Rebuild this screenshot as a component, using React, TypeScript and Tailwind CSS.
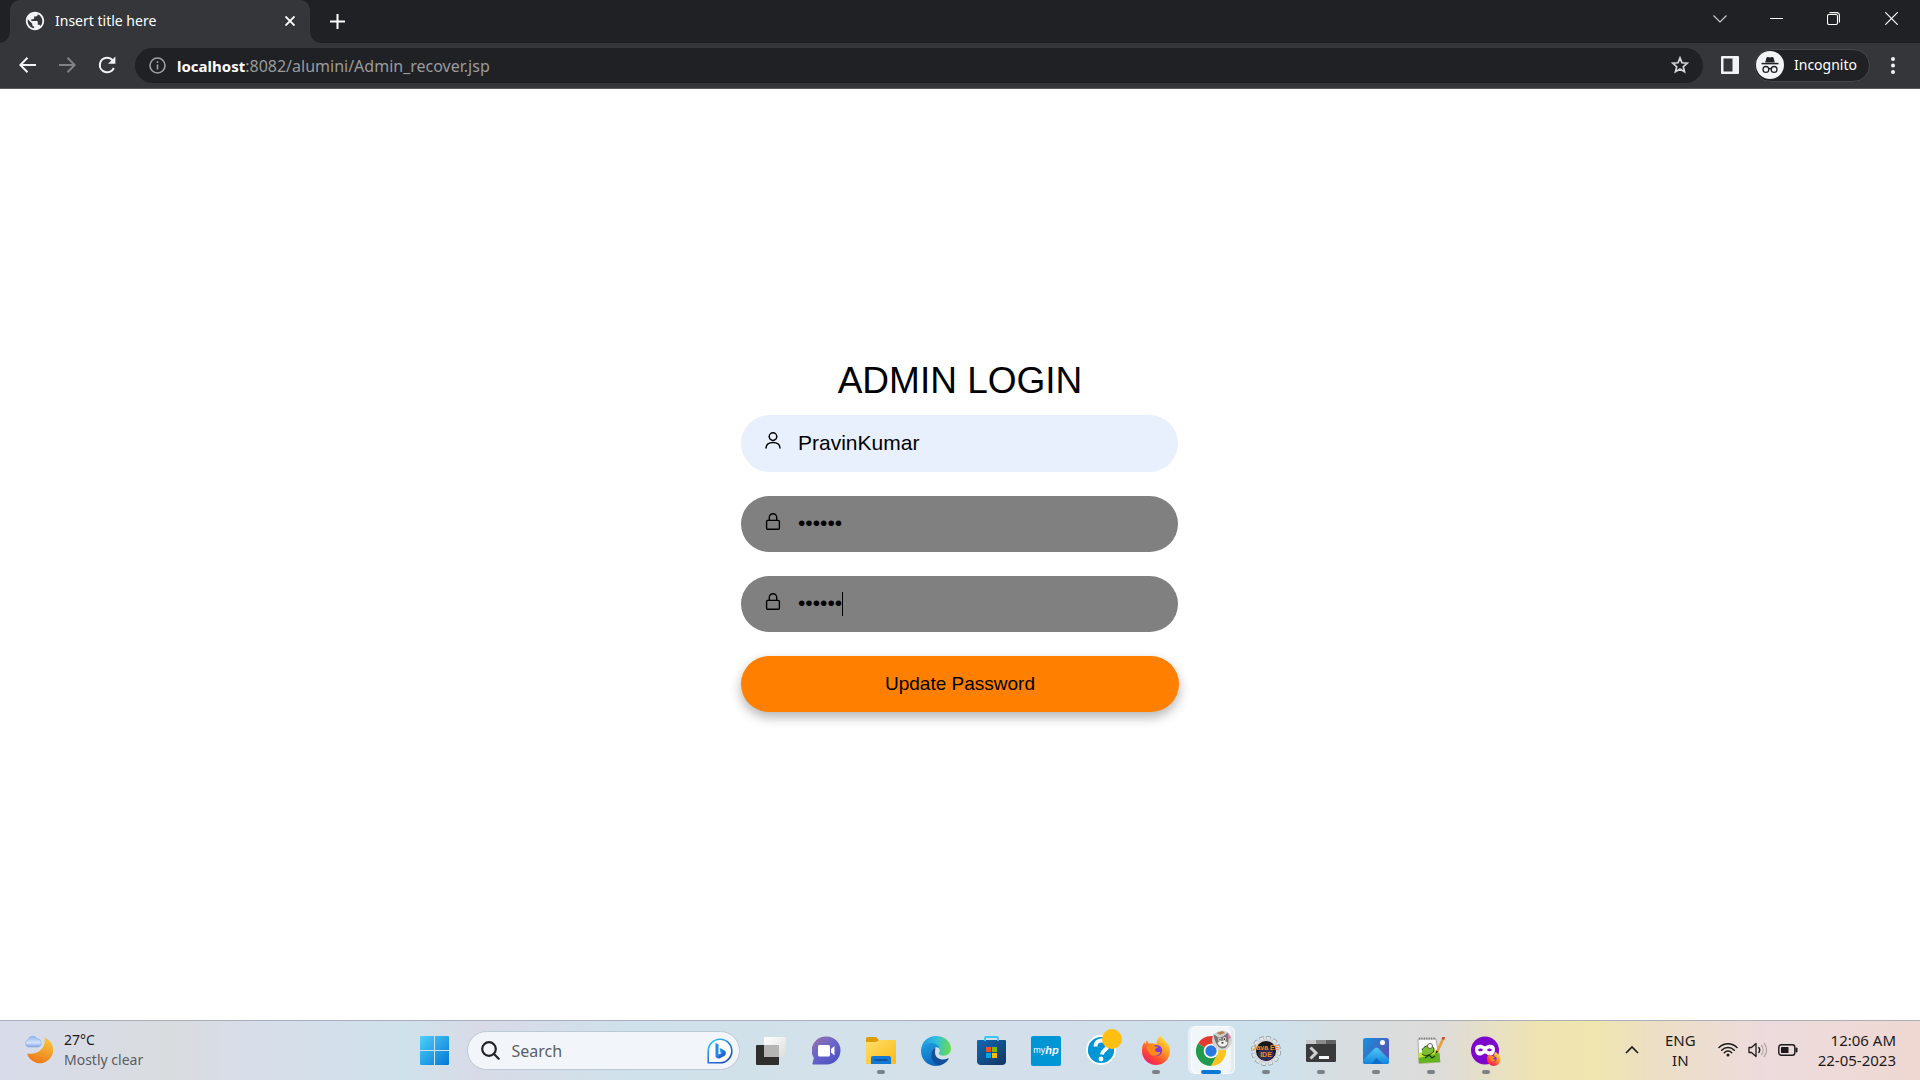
import type { ReactNode } from "react";
import { MdPublic } from "react-icons/md";

const ui = "font-['Noto_Sans','Open_Sans',sans-serif]";
const arial = "font-['Liberation_Sans',Arial,sans-serif]";

/* ---------- Browser chrome ---------- */

function TabStrip() {
  return (
    <div className="flex h-[43px] items-stretch bg-[#202124] pl-[10px] text-white">
      <div className="relative flex w-[300px] items-center rounded-t-[10px] bg-[#35363a] pr-[10px] pb-[2px] pl-[14px]">
        <span className="absolute bottom-0 -left-[10px] size-[10px] bg-[radial-gradient(circle_at_0_0,transparent_9px,#35363a_10px)]" />
        <span className="absolute -right-[10px] bottom-0 size-[10px] bg-[radial-gradient(circle_at_100%_0,transparent_9px,#35363a_10px)]" />
        <MdPublic className="size-[22px] shrink-0 text-[#f1f3f4]" />
        <span className={`ml-[9px] flex-1 truncate text-[14px] leading-5 ${ui}`}>Insert title here</span>
        <button aria-label="Close tab" className="grid size-5 place-items-center">
          <svg viewBox="0 0 10 10" className="size-[10px]" stroke="#fff" strokeWidth="1.9">
            <path d="M.5.5l9 9M9.500.500l-9 9" />
          </svg>
        </button>
      </div>
      <button aria-label="New tab" className="ml-[14px] grid w-[26px] place-items-center">
        <svg viewBox="0 0 14 14" className="size-[15px]" stroke="#fff" strokeWidth="1.9">
          <path d="M7 0v14M0 7h14" />
        </svg>
      </button>
      <div className="ml-auto flex">
        <button aria-label="Search tabs" className="grid w-[57px] place-items-center pb-[6px]">
          <svg viewBox="0 0 14 8" className="h-2 w-[14px]" stroke="#cfd0d2" fill="none" strokeWidth="1.1">
            <path d="M.5.5L7 7 13.500.500" />
          </svg>
        </button>
        <button aria-label="Minimize" className="grid w-[57px] place-items-center pb-[6px]">
          <span className="h-px w-[13px] bg-white" />
        </button>
        <button aria-label="Restore" className="grid w-[57px] place-items-center pb-[6px]">
          <svg viewBox="0 0 13 13" className="size-[13px]" stroke="#fff" fill="none" strokeWidth="1.100">
            <rect x=".5" y="2.500" width="10" height="10" rx="1.500" />
            <path d="M2.500.600H10a2.400 2.400 0 012.400 2.400v7.500" />
          </svg>
        </button>
        <button aria-label="Close" className="grid w-[58px] place-items-center pb-[6px]">
          <svg viewBox="0 0 13 13" className="size-[13px]" stroke="#fff" strokeWidth="1.200">
            <path d="M.3.3l12.400 12.400M12.700.300L.3 12.700" />
          </svg>
        </button>
      </div>
    </div>
  );
}

function Toolbar() {
  return (
    <div className="flex h-[46px] items-center border-b border-[#5b5c5f] bg-[#35363a] pr-[15px] pb-px pl-[7px] text-white">
      <button aria-label="Back" className="grid size-10 place-items-center">
        <svg viewBox="0 0 17 16" className="h-4 w-[17px]" stroke="#f1f3f4" fill="none" strokeWidth="2">
          <path d="M17 8H1.500M8.500.800L1.400 8l7.100 7.200" />
        </svg>
      </button>
      <button aria-label="Forward" disabled className="grid size-10 place-items-center">
        <svg viewBox="0 0 17 16" className="h-4 w-[17px]" stroke="#818285" fill="none" strokeWidth="2">
          <path d="M0 8h15.500M8.500.800L15.600 8l-7.100 7.200" />
        </svg>
      </button>
      <button aria-label="Reload" className="grid size-10 place-items-center">
        <svg viewBox="0 0 18 18" className="size-[18px]">
          <path d="M15.800 12A7.300 7.300 0 119 1.700c2.400 0 4.300 1 5.700 2.700" stroke="#f1f3f4" fill="none" strokeWidth="2.100" />
          <path d="M17.400.500v7.300h-7.300z" fill="#f1f3f4" />
        </svg>
      </button>
      <div className="ml-2 flex h-[35px] flex-1 items-center rounded-full bg-[#202124] pr-[14px] pl-[14px]">
        <button aria-label="View site information" className="shrink-0">
          <svg viewBox="0 0 17 17" className="size-[17px]" fill="none" stroke="#9aa0a6" strokeWidth="1.600">
            <circle cx="8.500" cy="8.500" r="7.500" />
            <path d="M8.500 7.500v5M8.500 4.200V6" />
          </svg>
        </button>
        <div role="textbox" aria-label="Address" className={`ml-[11px] flex-1 pt-[2px] text-[16px] leading-5 text-[#9a9b9d] ${ui}`}>
          <span className="text-[15px] font-bold text-white">localhost</span>:8082/alumini/Admin_recover.jsp
        </div>
        <button aria-label="Bookmark this tab">
          <svg viewBox="0 0 18 18" className="size-[18px]" fill="none" stroke="#d5d6d8" strokeWidth="1.700">
            <path d="M9 1.900l2 4.900 5.300.4-4 3.500 1.200 5.100L9 13.100l-4.500 2.700 1.200-5.100-4-3.500L7 6.800z" />
          </svg>
        </button>
      </div>
      <button aria-label="Side panel" className="ml-[18px]">
        <svg viewBox="0 0 18 18" className="size-[18px]">
          <rect width="18" height="18" rx="1" fill="#f1f3f4" />
          <rect x="2.500" y="2.500" width="9" height="13" fill="#35363a" />
        </svg>
      </button>
      <button className="ml-[15px] flex h-[33px] items-center rounded-full border border-[#46474b] bg-[#202124] pr-3 pl-px">
        <svg viewBox="0 0 28 28" className="size-7">
          <circle cx="14" cy="14" r="14" fill="#f1f3f4" />
          <path d="M9.200 11.500l1.200-4.600c.2-.8.900-1.200 1.700-.9l1.900.6 1.900-.6c.8-.3 1.500.1 1.700.9l1.200 4.600z" fill="#202124" />
          <path d="M5.500 12.600h17" stroke="#202124" strokeWidth="1.500" />
          <g fill="none" stroke="#202124" strokeWidth="1.300">
            <circle cx="9.900" cy="18.400" r="2.900" />
            <circle cx="18.100" cy="18.400" r="2.900" />
            <path d="M12.700 18c.8-.6 1.800-.6 2.600 0" />
          </g>
        </svg>
        <span className={`ml-[10px] text-[14px] leading-5 ${ui}`}>Incognito</span>
      </button>
      <button aria-label="Menu" className="ml-[11px] grid h-8 w-6 place-items-center">
        <svg viewBox="0 0 4 17" className="h-[17px] w-1" fill="#f1f3f4">
          <circle cx="2" cy="2" r="2" />
          <circle cx="2" cy="8.500" r="2" />
          <circle cx="2" cy="15" r="2" />
        </svg>
      </button>
    </div>
  );
}

/* ---------- Page ---------- */

function UserIcon() {
  return (
    <svg viewBox="0 0 16 17" className="h-[17px] w-4" fill="none" stroke="#000" strokeWidth="1.500" strokeLinecap="round">
      <circle cx="8" cy="4.600" r="3.800" />
      <path d="M1 16c0-3.500 3-5.500 7-5.500s7 2 7 5.500" />
    </svg>
  );
}

function LockIcon() {
  return (
    <svg viewBox="0 0 16 17" className="h-[17px] w-4" fill="none" stroke="#000" strokeWidth="1.400">
      <rect x="1.600" y="7.400" width="12.800" height="8.900" rx="1.200" />
      <path d="M4.300 7.400V4.400a3.700 3.700 0 017.400 0v3" />
    </svg>
  );
}

function Field({ label, type, value, icon, tone, caret }: {
  label: string; type: string; value: string; icon: ReactNode; tone: string; caret?: boolean;
}) {
  return (
    <div className="relative pr-px">
      <span className="absolute top-[17px] left-6">{icon}</span>
      <input
        aria-label={label}
        type={type}
        defaultValue={value}
        className={`block w-full rounded-full pr-6 pb-[2px] pl-[57px] text-[21px] leading-6 text-black caret-transparent outline-none ${tone}`}
      />
      {caret && <span className="absolute top-4 left-[101px] h-6 w-px bg-black" />}
    </div>
  );
}

function LoginPage() {
  return (
    <main className={`flex flex-1 items-center justify-center bg-white pb-10 text-black ${arial}`}>
      <form className="w-full max-w-[438px]" onSubmit={(e) => e.preventDefault()}>
        <h1 className="mb-[10px] text-center text-[37px] leading-[48px]">ADMIN LOGIN</h1>
        <div className="flex flex-col gap-6">
          <Field label="Username" type="text" value="PravinKumar" icon={<UserIcon />} tone="h-[57px] bg-[#e8f0fe]" />
          <Field label="New password" type="password" value="secret" icon={<LockIcon />} tone="h-14 bg-[#808080]" />
          <Field label="Confirm password" type="password" value="secret" icon={<LockIcon />} tone="h-14 bg-[#808080]" caret />
          <button className="h-14 w-full rounded-full bg-[#ff8000] text-[19px] shadow-[0_5px_12px_rgba(0,0,0,0.3)]">
            Update Password
          </button>
        </div>
      </form>
    </main>
  );
}

/* ---------- Taskbar ---------- */

function TaskbarApp({ name, children, state }: { name: string; children: ReactNode; state?: "running" | "active" }) {
  return (
    <button aria-label={name} className="relative grid h-[59px] w-[55px] place-items-center">
      {state === "active" && (
        <>
          <span className="absolute top-[5px] right-1 h-12 w-11 rounded-md border border-white/70 bg-white/40" />
          <span className="absolute top-[5px] left-1 h-12 w-[43px] rounded-md bg-white/50" />
        </>
      )}
      <span className="relative">{children}</span>
      {state === "running" && <span className="absolute bottom-[6px] h-1 w-2 rounded-full bg-[#7b8287]" />}
      {state === "active" && <span className="absolute bottom-[6px] h-1 w-5 rounded-full bg-[#0a78d4]" />}
    </button>
  );
}

const Windows = () => (
  <svg viewBox="0 0 29 29" className="size-[29px]">
    <defs>
      <linearGradient id="win" x1="0" y1="0" x2="1" y2="1">
        <stop offset="0" stopColor="#4fd0fb" />
        <stop offset="1" stopColor="#0078d4" />
      </linearGradient>
    </defs>
    <path fill="url(#win)" d="M1 0h13v14H0V1a1 1 0 011-1zM15 0h13a1 1 0 011 1v13H15zM0 15h14v14H1a1 1 0 01-1-1zM15 15h14v13a1 1 0 01-1 1H15z" />
  </svg>
);

const Bing = () => (
  <svg viewBox="0 0 26 26" className="size-[26px]">
    <defs>
      <linearGradient id="bing" x1="0" y1="0" x2=".8" y2="1">
        <stop offset="0" stopColor="#27d5f2" />
        <stop offset=".5" stopColor="#2a80ee" />
        <stop offset="1" stopColor="#1849b8" />
      </linearGradient>
    </defs>
    <path d="M13 1.200A11.800 11.800 0 1113 24.800H1.200V13A11.800 11.800 0 0113 1.200z" fill="#fff" stroke="url(#bing)" strokeWidth="1.600" />
    <path d="M8.500 5l3 1.200v10.300l-3 2z" fill="#2489ee" />
    <path d="M12.500 9.800l4.500 2.200c2.800 1.500 2.300 4.800.2 6l-4.200 2.200c-1.800.7-4.300-.2-4.500-2.500l4.200-1.600 1.800-1-1.200-.8z" fill="url(#bing)" />
  </svg>
);

const TaskView = () => (
  <svg viewBox="0 0 30 28" className="h-7 w-[30px]">
    <defs>
      <linearGradient id="tv" x1="0" y1="0" x2="1" y2="1"><stop offset="0" stopColor="#fff" /><stop offset="1" stopColor="#dcdcdc" /></linearGradient>
    </defs>
    <rect y="8" width="23" height="20" rx="1" fill="#2e2e2c" />
    <rect x="8" width="22" height="20" rx="1" fill="url(#tv)" />
    <path d="M8 8h15v12H9a1 1 0 01-1-1z" fill="#b5b5b3" />
  </svg>
);

const Chat = () => (
  <svg viewBox="0 0 29 29" className="size-[29px]">
    <defs>
      <linearGradient id="chat" x1="0" y1="0" x2=".7" y2="1"><stop offset="0" stopColor="#a070a8" /><stop offset=".5" stopColor="#6a66c8" /><stop offset="1" stopColor="#4f52c6" /></linearGradient>
    </defs>
    <path d="M14.500.500a14 14 0 110 28H1c-.6 0-.8-.5-.6-1l1.500-5.500A14 14 0 0114.500.500z" fill="url(#chat)" />
    <rect x="6" y="9" width="12" height="11.500" rx="1.500" fill="#fff" />
    <path d="M19 13l3.500-3v9.500L19 16.500z" fill="#fff" />
  </svg>
);

const Explorer = () => (
  <svg viewBox="0 0 30 27" className="h-[27px] w-[30px]">
    <defs>
      <linearGradient id="fold" x1="0" y1="0" x2="1" y2="1"><stop offset="0" stopColor="#ffdf6b" /><stop offset="1" stopColor="#fbb914" /></linearGradient>
    </defs>
    <path d="M0 6V1.500A1.500 1.500 0 011.500 0H10l3 3H29v4z" fill="#dd9d08" />
    <path d="M0 5h10l3-2h16a1 1 0 011 1v22a1 1 0 01-1 1H0z" fill="url(#fold)" />
    <path d="M5 27v-6a2 2 0 012-2h16a2 2 0 012 2v6z" fill="#1479d0" />
    <path d="M9 23h12" stroke="#0b4c92" strokeWidth="1.600" strokeLinecap="round" />
  </svg>
);

const Edge = () => (
  <svg viewBox="0 0 30 30" className="size-[30px]">
    <defs>
      <linearGradient id="eg1" x1="0" y1=".3" x2="1" y2=".4"><stop offset="0" stopColor="#2097e0" /><stop offset=".5" stopColor="#2fc0dc" /><stop offset="1" stopColor="#6bdc4b" /></linearGradient>
      <linearGradient id="eg2" x1="0" y1="0" x2=".4" y2="1"><stop offset="0" stopColor="#22a0e4" /><stop offset="1" stopColor="#0c6ac2" /></linearGradient>
    </defs>
    <path d="M.3 13C1 5.500 7 0 15 0c8.500 0 15 5.500 15 12.500 0 4.300-3.200 7.200-7.500 7.200-3 0-4.800-1-4.800-2.200 0-.8 1-1.200 1-3.200 0-2.600-2.800-5.300-7.200-5.300-4.500 0-8.500 1.800-11.200 4z" fill="url(#eg1)" />
    <path d="M0 15c0-4 4-8 10-8 4.500 0 8 2.500 8.600 6C17.500 11.500 16 11 14.500 11.500c-6 2-5 13 3 17.500-1 .6-1.500 1-2.500 1C6.500 30 0 23.500 0 15z" fill="url(#eg2)" />
    <path d="M14 11.700C8 15 9 26 17.500 29.700c4-.7 7.700-3 10-6.500.5-.7-.1-1.200-.8-.8-5.500 2.600-12.700 0-12.700-6 0-2 .7-3.800 0-4.700z" fill="#10509a" />
  </svg>
);

const Store = () => (
  <svg viewBox="0 0 29 29" className="size-[29px]">
    <defs>
      <linearGradient id="store" x1="0" y1="0" x2="1" y2="1"><stop offset="0" stopColor="#1068b4" /><stop offset="1" stopColor="#143560" /></linearGradient>
    </defs>
    <path d="M0 5a1 1 0 011-1h27a1 1 0 011 1v20a4 4 0 01-4 4H4a4 4 0 01-4-4z" fill="url(#store)" />
    <path d="M8 5V2a1 1 0 011-1h11a1 1 0 011 1v3" fill="none" stroke="#3fc3f4" strokeWidth="1.800" />
    <path d="M9 11h5v5H9z" fill="#f25022" /><path d="M15 11h5v5h-5z" fill="#7fba00" />
    <path d="M9 17h5v5H9z" fill="#00a4ef" /><path d="M15 17h5v5h-5z" fill="#ffb900" />
  </svg>
);

const MyHp = () => (
  <span className="flex size-[30px] items-center justify-center rounded-[2px] bg-[#0096d6] font-['Liberation_Sans',sans-serif] text-[9px] leading-none text-white">
    my<b className="text-[11px] italic">hp</b>
  </span>
);

const Help = () => (
  <svg viewBox="0 0 36 38" className="h-[38px] w-9">
    <circle cx="15" cy="22" r="14" fill="#0096d6" stroke="#fff" strokeWidth="1.800" />
    <path d="M9.500 18.500c0-4 2.500-6 6-6s6 2 6 5.200c0 4.300-5.300 4.200-5.600 8.800" fill="none" stroke="#fff" strokeWidth="4" />
    <circle cx="15" cy="31" r="2.400" fill="#fff" />
    <circle cx="26" cy="11" r="10" fill="#ffbf10" />
  </svg>
);

const FoxShape = () => (
  <>
    <defs>
      <linearGradient id="fox" x1=".9" y1="0" x2=".2" y2="1"><stop offset="0" stopColor="#fff04a" /><stop offset=".4" stopColor="#ff9a22" /><stop offset=".75" stopColor="#ff4038" /><stop offset="1" stopColor="#e8187a" /></linearGradient>
    </defs>
    <path d="M18 0c4 2 4.500 5 6.500 6.500C27.500 9 28 12 28 15A14 14 0 110 15C0 11 1 8 2.500 6L3 8.500 5 4l1.500 3.500c3-.8 6 .2 8 .500C14.500 5 15.500 2 18 0z" fill="url(#fox)" />
    <circle cx="14.500" cy="14.500" r="5.600" fill="#7a3bdc" />
    <path d="M5 10c3-2 6-1.500 8 .5l3 .2c-.3 1.500-3 1.600-3 3 0 2 3 3 5.500 2-1 4-7 5.500-10.500 2-2-2-2.500-5-3-7.700z" fill="#ff8a1c" />
  </>
);

const Firefox = () => (
  <svg viewBox="0 0 28 29" className="h-[29px] w-7"><FoxShape /></svg>
);

const Chrome = () => (
  <svg viewBox="0 0 36 38" className="h-[38px] w-9">
    <path d="M15 23L2 15.500A15 15 0 0128 15.500z" fill="#e33b2e" />
    <path d="M15 23L2 15.500A15 15 0 0015 38l6.500-11.200z" fill="#229a4b" />
    <path d="M15 15.500h13A15 15 0 0115 38l6.500-11.300z" fill="#fcc31e" />
    <circle cx="15" cy="23" r="7.300" fill="#fff" />
    <circle cx="15" cy="23" r="5.700" fill="#2a78e4" />
    <circle cx="26" cy="12.500" r="10" fill="#d5d3d0" />
    <path d="M17.500 6l5 3.500 4.500-1 5-4 .5 8c0 5-2.500 8-6 8s-8-5-9-14.500z" fill="#77777a" />
    <path d="M21.500 15c2-2.500 7-3 10-.5 0 4-7.500 6.500-10 .5z" fill="#f1efec" />
    <path d="M20.500 5l6-2 2.500 2-5 2z" fill="#b08252" />
    <ellipse cx="23.800" cy="11.500" rx="1.600" ry="1.900" fill="#e9edda" />
    <ellipse cx="28.500" cy="11" rx="1.600" ry="1.900" fill="#e9edda" />
    <path d="M24 10.800v1.600M28.400 10.300v1.600M25.500 15l2-.3" stroke="#2c2c2c" strokeWidth="1.300" />
    <path d="M31.500 4.500L35 9.500l-2.500 2z" fill="#dd7aa0" />
  </svg>
);

const JavaEE = () => (
  <svg viewBox="0 0 30 30" className="size-[30px]">
    <circle cx="15" cy="15" r="13.200" fill="none" stroke="#8b8f92" strokeWidth="3.600" strokeDasharray="4.300 2.610" />
    <circle cx="15" cy="15" r="12.900" fill="none" stroke="#e6e8e9" strokeWidth="2.800" strokeDasharray="3.600 3.154" strokeDashoffset="-.3" />
    <circle cx="15" cy="15" r="11" fill="#1b161c" stroke="#d4d7d9" strokeWidth="2" />
    <ellipse cx="15" cy="18" rx="8" ry="6.500" fill="#332b55" />
    <g fill="#f28a1e" fontFamily="Liberation Sans, sans-serif" fontWeight="700" fontSize="7" textAnchor="middle">
      <text x="15" y="14">Java EE</text>
      <text x="15" y="21">IDE</text>
    </g>
  </svg>
);

const Terminal = () => (
  <svg viewBox="0 0 30 22" className="h-[22px] w-[30px]">
    <rect width="30" height="22" rx="1.500" fill="#3a3a3a" />
    <path d="M1 0h9v4H0V1a1 1 0 011-1z" fill="#c9c9c9" />
    <path d="M10 0h10v4H10z" fill="#8b8b8b" />
    <path d="M20 0h9a1 1 0 011 1v3H20z" fill="#616161" />
    <path d="M4.500 7.500l5.500 5.500-5.500 5.500" fill="none" stroke="#d0d0d0" strokeWidth="3" />
    <path d="M13 17.500h10" stroke="#f5f5f5" strokeWidth="3" />
  </svg>
);

const Photos = () => (
  <svg viewBox="0 0 26 26" className="size-[26px]">
    <defs>
      <linearGradient id="ph" x1="0" y1="0" x2="1" y2=".6"><stop offset="0" stopColor="#1592de" /><stop offset="1" stopColor="#5454b0" /></linearGradient>
      <linearGradient id="ph2" x1="0" y1="0" x2="0" y2="1"><stop offset="0" stopColor="#4fc8f6" /><stop offset="1" stopColor="#1285dc" /></linearGradient>
    </defs>
    <rect width="26" height="26" rx="2.500" fill="url(#ph)" />
    <path d="M0 22L11.500 10.500a3 3 0 014 0L26 21v2.500a2.500 2.500 0 01-2.500 2.500h-21A2.500 2.500 0 010 23.500z" fill="url(#ph2)" />
    <path d="M8 26l5.500-6 6 6z" fill="#0d6dca" />
    <circle cx="19.500" cy="4.500" r="2.600" fill="#f4f8ff" />
  </svg>
);

const NotepadPP = () => (
  <svg viewBox="0 0 28 27" className="h-[27px] w-7">
    <path d="M1 2h18l4 23-21 1.500z" fill="#fafafa" stroke="#9a9a9a" strokeWidth=".8" />
    <path d="M1.400 16l19.700-3 2 12-21 1.300z" fill="#c4e82c" />
    <path d="M1.500 21l21-5 .7 9-21 1.300z" fill="#63b41e" />
    <path d="M5 13c2-4 6-5 9-4 4 1 4 6 0 8s-7 2-9 0" fill="#7cbf34" stroke="#263a14" strokeWidth="1" />
    <circle cx="13" cy="9" r="2.500" fill="#fff" stroke="#444" strokeWidth=".8" />
    <path d="M8 21l4-3 3 3 3-2" fill="none" stroke="#1e3312" strokeWidth="1.100" />
    <path d="M2 1.500h17" stroke="#777" strokeWidth="2" strokeDasharray="1.200 1.200" />
    <path d="M27 0l-7 15" stroke="#e6a03a" strokeWidth="2.600" />
    <path d="M28 0l-2.500 0-1 2 2.600 1z" fill="#d14a3a" />
    <path d="M19 13.500l-.6 3.800 3-2.500z" fill="#3a2c1a" />
  </svg>
);

const FoxPrivate = () => (
  <svg viewBox="0 0 30 30" className="size-[30px]">
    <circle cx="14" cy="14.500" r="14" fill="#7d08cc" />
    <path d="M4 13c0-5 6-5.500 10-2.500C18 7.500 24 8 24 13s-2.500 6.500-5 6.500-3.500-2-5-2-2.500 2-5 2S4 18 4 13z" fill="#fff" />
    <path d="M7 14c1.500-2 4-2 5 0-1.200 1.800-3.800 1.800-5 0zM16 14c1.200-2 3.700-2 5 0-1.200 1.800-3.800 1.800-5 0z" fill="#7d08cc" />
    <g transform="translate(16 16) scale(.48)"><FoxShape /></g>
  </svg>
);

const apps: { name: string; icon: ReactNode; state?: "running" | "active" }[] = [
  { name: "Task view", icon: <TaskView /> },
  { name: "Chat", icon: <Chat /> },
  { name: "File Explorer", icon: <Explorer />, state: "running" },
  { name: "Edge", icon: <Edge /> },
  { name: "Store", icon: <Store /> },
  { name: "myHP", icon: <MyHp /> },
  { name: "Support", icon: <div className="-mt-2 ml-[6px]"><Help /></div> },
  { name: "Firefox", icon: <Firefox />, state: "running" },
  { name: "Chrome", icon: <div className="-mt-2 ml-[6px]"><Chrome /></div>, state: "active" },
  { name: "Java EE IDE", icon: <JavaEE />, state: "running" },
  { name: "Terminal", icon: <Terminal />, state: "running" },
  { name: "Photos", icon: <Photos />, state: "running" },
  { name: "Notepad++", icon: <NotepadPP />, state: "running" },
  { name: "Firefox Private Browsing", icon: <FoxPrivate />, state: "running" },
];

function Weather() {
  return (
    <svg viewBox="0 0 29 29" className="size-[29px]">
      <defs>
        <linearGradient id="moon" x1=".8" y1="0" x2=".4" y2="1"><stop offset="0" stopColor="#f9c83a" /><stop offset="1" stopColor="#ee7a1a" /></linearGradient>
        <linearGradient id="cloud" x1="0" y1="0" x2="0" y2="1"><stop offset="0" stopColor="#8fb4ee" /><stop offset=".6" stopColor="#d4e3fb" /><stop offset="1" stopColor="#7fa3e6" /></linearGradient>
      </defs>
      <path d="M20.500 2.500A13.300 13.300 0 113 18.500C14 20.500 22.500 13 20.500 2.500z" fill="url(#moon)" />
      <path d="M4.500 12a3.700 3.700 0 01-.4-7.200 5 5 0 019.200-1 4.200 4.200 0 011.200 8.200z" fill="url(#cloud)" stroke="#8aabe2" strokeWidth=".6" />
    </svg>
  );
}

function Taskbar() {
  return (
    <footer
      className={`grid h-[60px] grid-cols-[1fr_auto_1fr] items-center border-t border-[#a9b0ba] bg-[linear-gradient(90deg,#d8dcea_0%,#d9dcdf_9%,#d7dde9_13%,#cfe1ea_21%,#d8dbe7_25%,#cfe1ea_33%,#d3e1ea_45%,#d3dfea_55%,#cde2ed_66%,#d7dde0_70%,#dddcda_75%,#efe3b2_80%,#f0e6ae_83%,#ecdfc4_86%,#eddbdd_92%,#efd8d2_100%)] text-[#1b1b1b] ${ui}`}
    >
      <button className="flex items-center justify-self-start pb-[2px] pl-6 text-left text-[14px] leading-5">
        <Weather />
        <span className="ml-[11px]">
          <span className="block">27°C</span>
          <span className="block text-[#5a5d62]">Mostly clear</span>
        </span>
      </button>
      <nav className="flex items-center">
        <TaskbarApp name="Start"><Windows /></TaskbarApp>
        <label className="mr-1 ml-[5px] flex h-[39px] w-[273px] items-center rounded-full border border-[#bcc9d6] bg-[#f2f6fa] pr-[6px] pl-[13px]">
          <svg viewBox="0 0 19 19" className="size-[19px] shrink-0" fill="none" stroke="#222" strokeWidth="2.200" strokeLinecap="round">
            <circle cx="8" cy="8" r="6.800" />
            <path d="M13 13l4.700 4.700" />
          </svg>
          <input aria-label="Search" placeholder="Search" className="mx-3 w-0 flex-1 bg-transparent text-[16px] placeholder:text-[#5c5f63]" />
          <Bing />
        </label>
        {apps.map((a) => (
          <TaskbarApp key={a.name} name={a.name} state={a.state}>{a.icon}</TaskbarApp>
        ))}
      </nav>
      <div className="flex items-center justify-self-end pr-6 pb-[2px] text-[15px] leading-5">
        <button aria-label="Show hidden icons" className="mr-[26px]">
          <svg viewBox="0 0 14 8" className="h-2 w-[14px]" fill="none" stroke="#1b1b1b" strokeWidth="1.700">
            <path d="M1 7l6-6 6 6" />
          </svg>
        </button>
        <button className="text-center">ENG<br />IN</button>
        <button aria-label="Network, sound and battery" className="mr-5 ml-[22px] flex items-center gap-[10px]">
          <svg viewBox="0 0 20 15" className="h-[15px] w-5" fill="none" stroke="#1b1b1b" strokeWidth="1.500" strokeLinecap="round">
            <path d="M1 5.500a12.500 12.500 0 0118 0M3.700 8.200a8.700 8.700 0 0112.600 0M6.300 10.700a5.100 5.100 0 017.400 0" />
            <circle cx="10" cy="13" r="1.500" fill="#1b1b1b" stroke="none" />
          </svg>
          <svg viewBox="0 0 20 16" className="h-4 w-5" fill="none" stroke="#1b1b1b" strokeWidth="1.300" strokeLinejoin="round" strokeLinecap="round">
            <path d="M1 5.500h2.500L8 1.500v13L3.500 10.500H1z" />
            <path d="M10.800 5.500a4 4 0 010 5" />
            <path d="M13.500 3.500a7 7 0 010 9M16.200 1.500a10 10 0 010 13" stroke="#b5a8a4" />
          </svg>
          <svg viewBox="0 0 20 12" className="h-3 w-5" fill="none" stroke="#1b1b1b" strokeWidth="1.400">
            <rect x=".8" y=".8" width="16" height="10.400" rx="2.500" />
            <rect x="3" y="3" width="7.500" height="6" rx=".6" fill="#1b1b1b" stroke="none" />
            <path d="M18.500 4.500v3" strokeWidth="2" strokeLinecap="round" />
          </svg>
        </button>
        <button className="text-right">12:06 AM<br />22-05-2023</button>
      </div>
    </footer>
  );
}

export default function App() {
  return (
    <div className="flex min-h-screen flex-col">
      <header>
        <TabStrip />
        <Toolbar />
      </header>
      <LoginPage />
      <Taskbar />
    </div>
  );
}
